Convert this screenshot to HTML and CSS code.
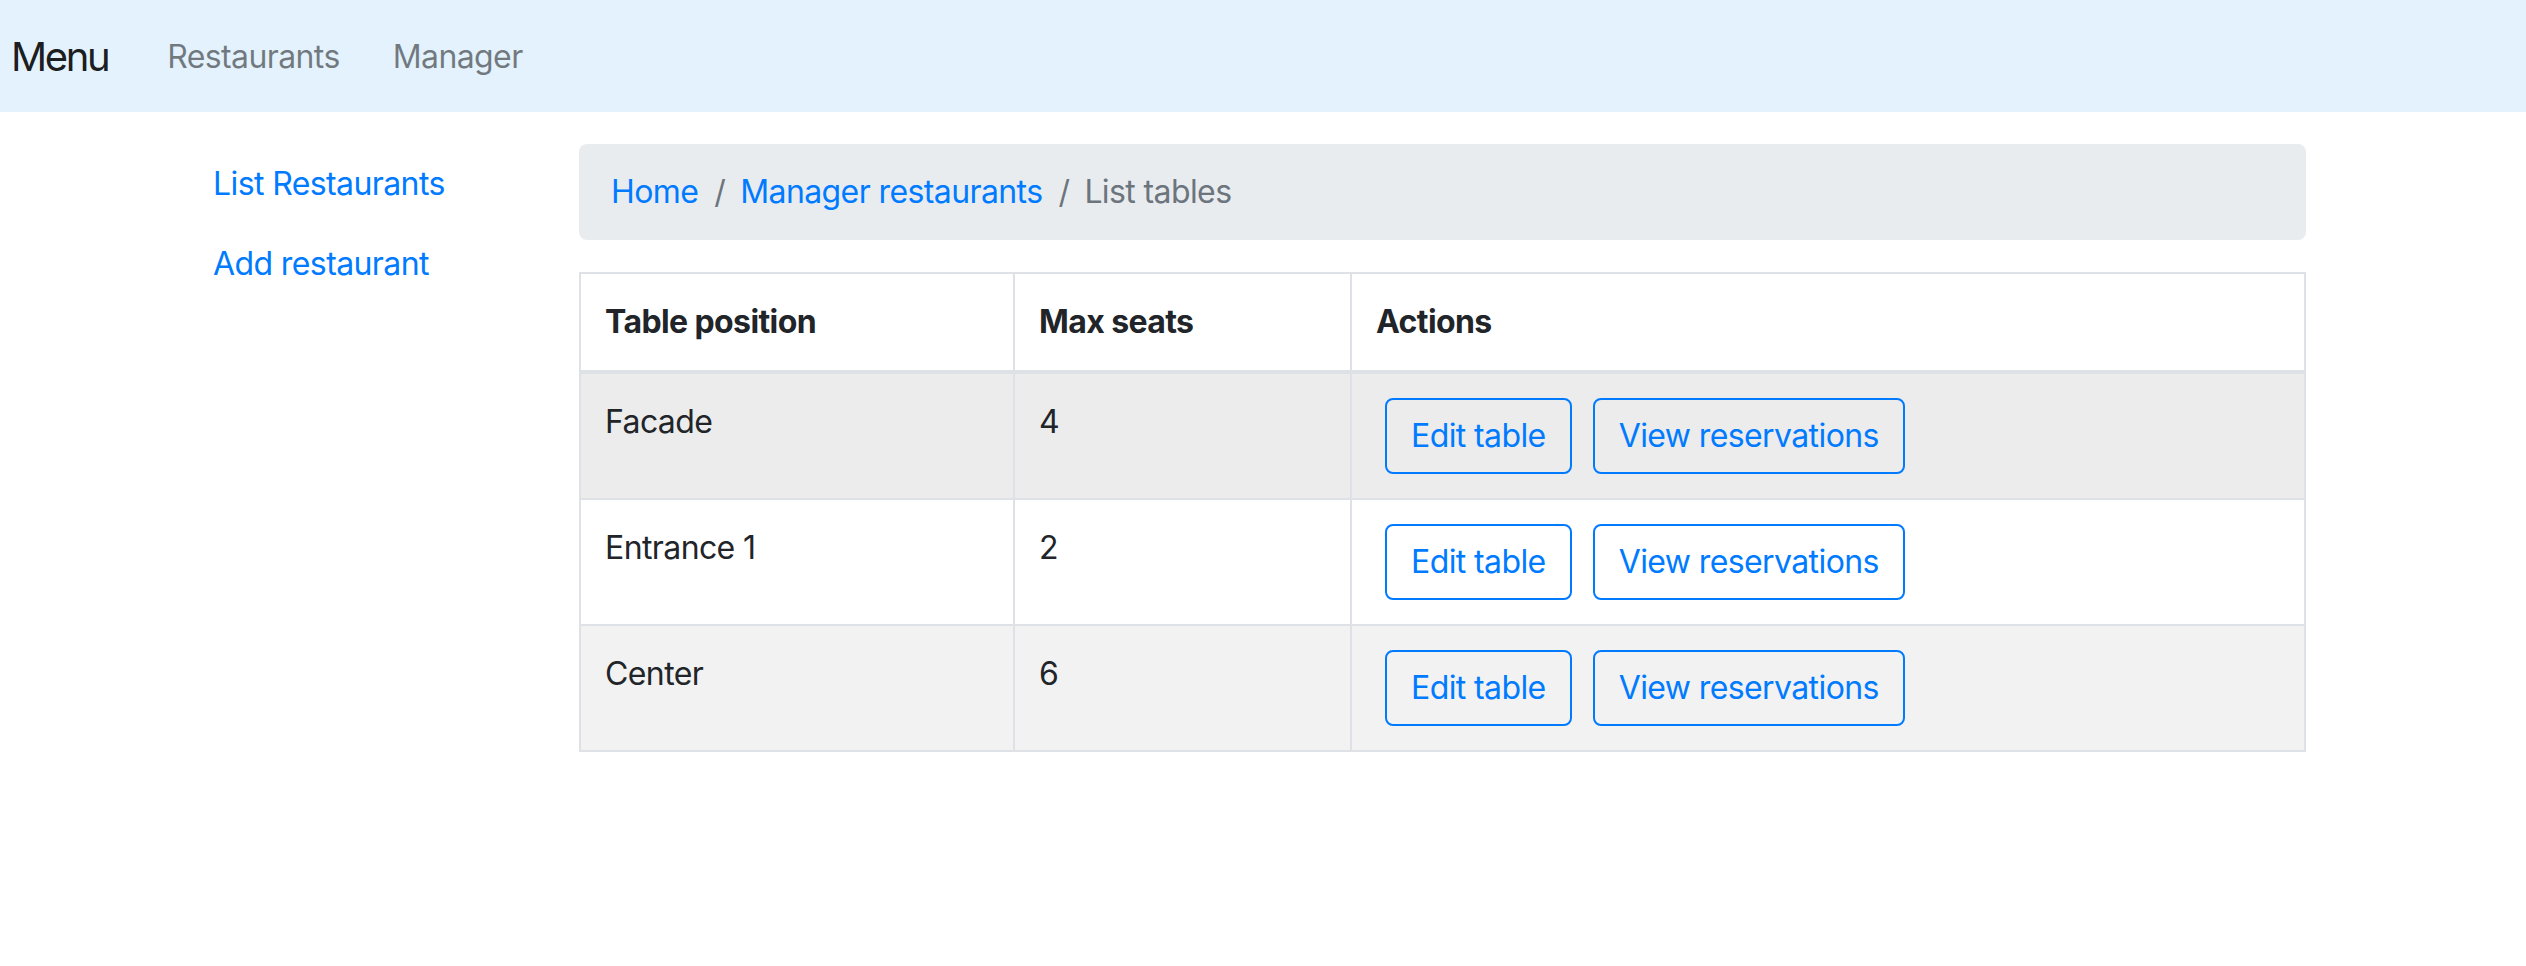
FILE: index.html
```html
<!DOCTYPE html>
<html lang="en">
<head>
<meta charset="utf-8">
<title>List tables</title>
<link rel="stylesheet" href="styles.css">
</head>
<body>
<nav class="navbar">
  <a class="brand" href="#">Menu</a>
  <div class="nav-links">
    <a class="nav-link" href="#">Restaurants</a>
    <a class="nav-link" href="#">Manager</a>
  </div>
</nav>
<div class="page">
  <aside class="sidebar">
    <a class="side-link" href="#">List Restaurants</a>
    <a class="side-link" href="#">Add restaurant</a>
  </aside>
  <main class="content">
    <ol class="breadcrumb">
      <li class="crumb"><a href="#">Home</a></li>
      <li class="crumb"><a href="#">Manager restaurants</a></li>
      <li class="crumb active">List tables</li>
    </ol>
    <table class="tables">
      <thead>
        <tr>
          <th class="col-pos">Table position</th>
          <th class="col-seats">Max seats</th>
          <th class="col-actions">Actions</th>
        </tr>
      </thead>
      <tbody>
        <tr class="row-hover">
          <td>Facade</td>
          <td>4</td>
          <td><div class="actions"><a class="btn" href="#">Edit table</a><a class="btn" href="#">View reservations</a></div></td>
        </tr>
        <tr class="row-plain">
          <td>Entrance 1</td>
          <td>2</td>
          <td><div class="actions"><a class="btn" href="#">Edit table</a><a class="btn" href="#">View reservations</a></div></td>
        </tr>
        <tr class="row-striped">
          <td>Center</td>
          <td>6</td>
          <td><div class="actions"><a class="btn" href="#">Edit table</a><a class="btn" href="#">View reservations</a></div></td>
        </tr>
      </tbody>
    </table>
  </main>
</div>
</body>
</html>
```

FILE: styles.css
```css
* { box-sizing: border-box; }

body {
  margin: 0;
  font-family: Inter, "Noto Sans", "Liberation Sans", sans-serif;
  font-size: 32px;
  line-height: 48px;
  letter-spacing: -0.6px;
  color: #212529;
  background: #ffffff;
}

a { text-decoration: none; }

.navbar {
  height: 112px;
  background: #e3f2fd;
  display: flex;
  align-items: center;
  padding-left: 11px;
  padding-top: 2px;
}

.brand {
  font-size: 40px;
  line-height: 60px;
  letter-spacing: -2.4px;
  color: rgba(0, 0, 0, 0.9);
  margin-right: 59px;
}

.nav-links {
  display: flex;
  gap: 53px;
}

.nav-link {
  color: rgba(0, 0, 0, 0.5);
}

.page {
  display: flex;
  padding-top: 32px;
  padding-left: 181px;
}

.sidebar {
  width: 398px;
  display: flex;
  flex-direction: column;
  align-items: flex-start;
}

.side-link {
  color: #007bff;
  padding: 16px 32px;
}

.content {
  width: 1727px;
}

.breadcrumb {
  list-style: none;
  margin: 0 0 32px 0;
  padding: 24px 32px;
  background: #e9ecef;
  border-radius: 8px;
  display: flex;
}

.crumb a { color: #007bff; }

.crumb + .crumb::before {
  content: "/";
  color: #6c757d;
  padding: 0 15px 0 16px;
}

.crumb.active { color: #6c757d; }

.tables {
  width: 100%;
  border-collapse: collapse;
}

.tables th,
.tables td {
  border: 2px solid #dee2e6;
  padding: 24px;
  text-align: left;
  vertical-align: top;
}

.tables th {
  vertical-align: bottom;
  border-bottom-width: 4px;
  font-weight: 700;
}

.col-pos { width: 434px; }
.col-seats { width: 337px; }

.row-hover { background: #ececec; }
.row-plain { background: #ffffff; }
.row-striped { background: #f2f2f2; }

.actions {
  display: flex;
  gap: 21px;
  padding-left: 9px;
}

.btn {
  display: inline-block;
  color: #007bff;
  border: 2px solid #007bff;
  border-radius: 8px;
  padding: 12px 24px;
  line-height: 48px;
}
```
